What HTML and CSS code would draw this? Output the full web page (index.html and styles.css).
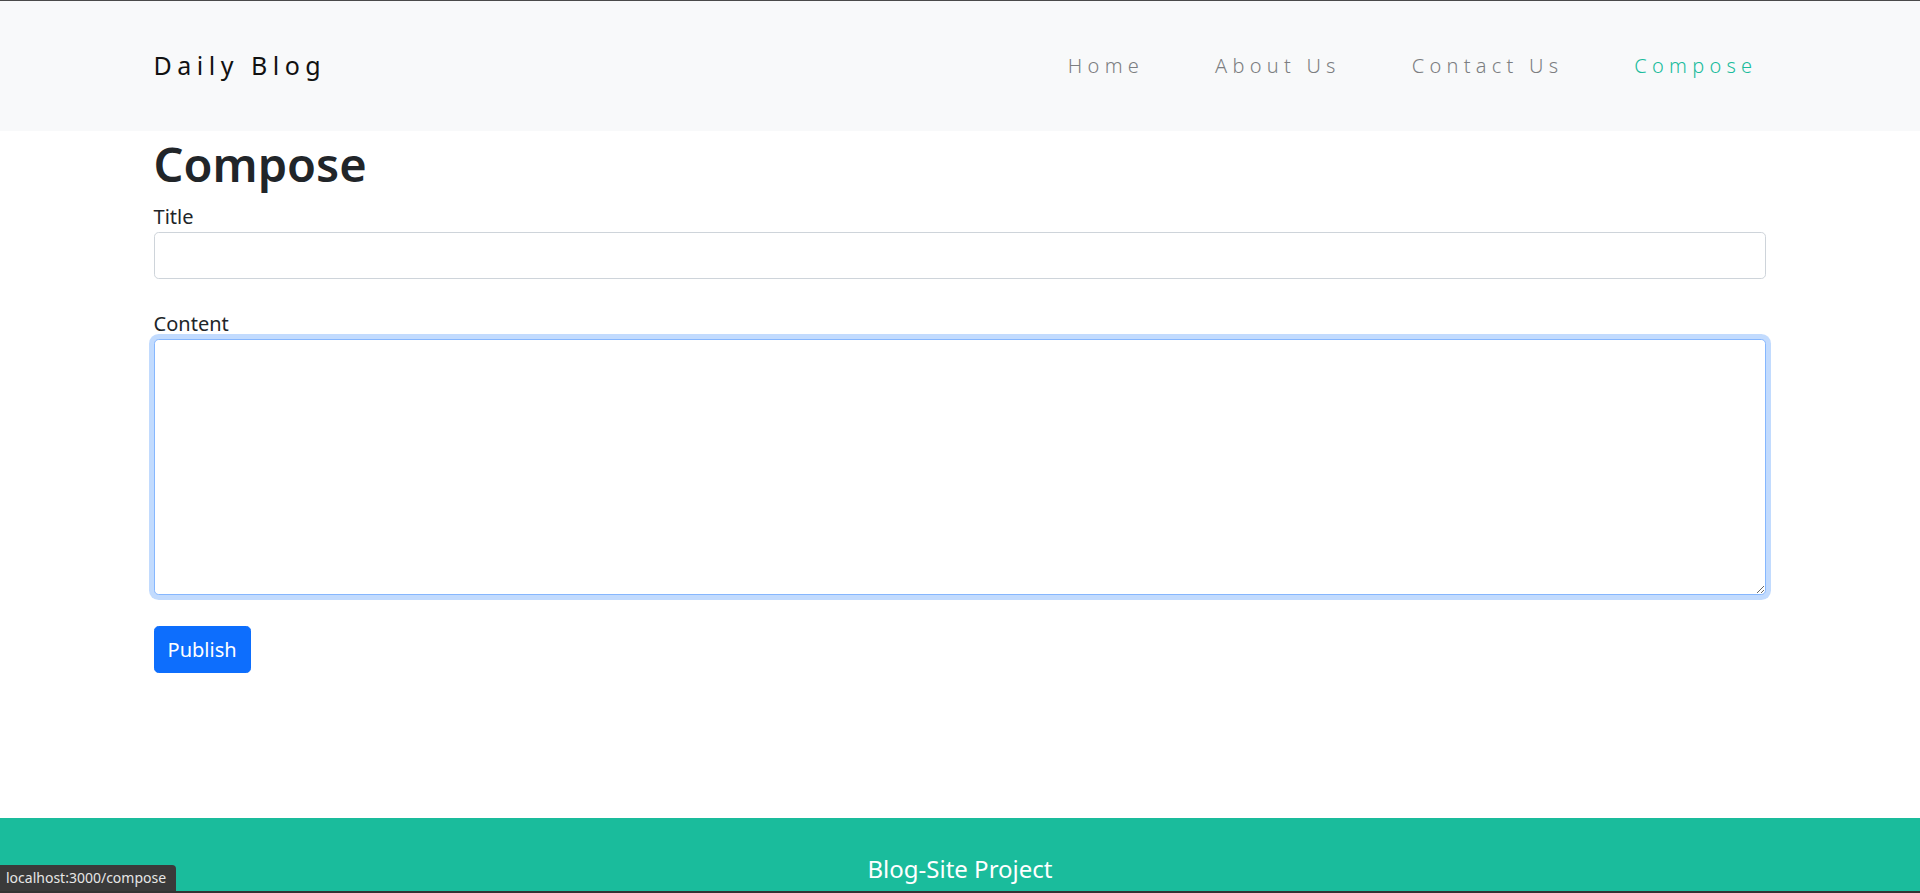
FILE: index.html
```html
<!DOCTYPE html>
<html lang="en">
<head>
<meta charset="utf-8">
<title>Daily Blog - Compose</title>
<link rel="stylesheet" href="styles.css">
</head>
<body>
<header class="site-header">
  <div class="container nav-bar">
    <a class="brand" href="#">Daily Blog</a>
    <ul class="nav">
      <li><a class="nav-link" href="#">Home</a></li>
      <li><a class="nav-link" href="#">About Us</a></li>
      <li><a class="nav-link" href="#">Contact Us</a></li>
      <li><a class="nav-link active" href="#">Compose</a></li>
    </ul>
  </div>
</header>
<main class="container">
  <h1 class="page-title">Compose</h1>
  <form class="compose-form">
    <div class="field">
      <label for="title">Title</label>
      <input id="title" class="control" type="text">
    </div>
    <div class="field">
      <label for="content">Content</label>
      <textarea id="content" class="control control-area focused" rows="8"></textarea>
    </div>
    <button class="btn-publish" type="button">Publish</button>
  </form>
</main>
<footer class="site-footer">
  <p>Blog-Site Project</p>
</footer>
<div class="status-bar">localhost:3000/compose</div>
<div class="window-edge"></div>
</body>
</html>
```
FILE: styles.css
```css
* { box-sizing: border-box; }
html, body { margin: 0; padding: 0; }
body {
  font-family: "Noto Sans", "Open Sans", sans-serif;
  font-size: 20px;
  line-height: 1.5;
  color: #212529;
  background: #fff;
  border-top: 1px solid #4a4a4a;
  height: 893px;
  overflow: hidden;
}
.container {
  width: 84%;
  margin: 0 auto;
}
.site-header {
  background: #f8f9fa;
  height: 130px;
}
.nav-bar {
  height: 100%;
  display: flex;
  align-items: center;
  justify-content: space-between;
}
.brand {
  font-size: 25px;
  letter-spacing: 5.5px;
  color: #111;
  text-decoration: none;
  font-weight: 400;
}
.nav {
  list-style: none;
  margin: 0;
  padding: 0 9px 0 0;
  display: flex;
  gap: 71px;
}
.nav-link {
  font-size: 20px;
  letter-spacing: 5.25px;
  color: #7c7e81;
  text-decoration: none;
  font-weight: 300;
}
.nav-link.active { color: #1abc9c; }
.page-title {
  font-size: 47px;
  font-weight: 600;
  line-height: 1.4;
  margin: 1px 0 10px;
  height: 60px;
}
.field { margin-bottom: 30px; }
.field label { display: inline-block; }
.control {
  display: block;
  width: 100%;
  padding: 7.5px 15px;
  font: inherit;
  color: #212529;
  background: #fff;
  border: 1.25px solid #ced4da;
  border-radius: 4.7px;
  height: 47px;
  outline: none;
}
.control-area {
  height: 256px;
  resize: vertical;
}
.control.focused {
  border-color: #86b7fe;
  box-shadow: 0 0 0 5px rgba(13, 110, 253, 0.25);
}
.btn-publish {
  display: inline-block;
  margin-top: 1px;
  font: inherit;
  color: #fff;
  background: #0d6efd;
  border: 1.25px solid #0d6efd;
  border-radius: 4.7px;
  padding: 7.5px 13px;
  height: 47px;
  line-height: 1.5;
}
.site-footer {
  margin-top: 145px;
  background: #1abc9c;
  color: #fff;
  text-align: center;
  padding-top: 33px;
  height: 120px;
}
.site-footer p {
  margin: 0;
  font-size: 24px;
  line-height: 1.5;
}
.status-bar {
  position: fixed;
  left: 0;
  bottom: 2px;
  height: 26px;
  padding: 0 10px 0 6px;
  background: #3a3a3a;
  color: #e6e6e6;
  font-size: 14px;
  line-height: 26px;
  border-top-right-radius: 4px;
}
.window-edge {
  position: fixed;
  left: 0;
  right: 0;
  bottom: 0;
  height: 2px;
  background: #333;
}
```
